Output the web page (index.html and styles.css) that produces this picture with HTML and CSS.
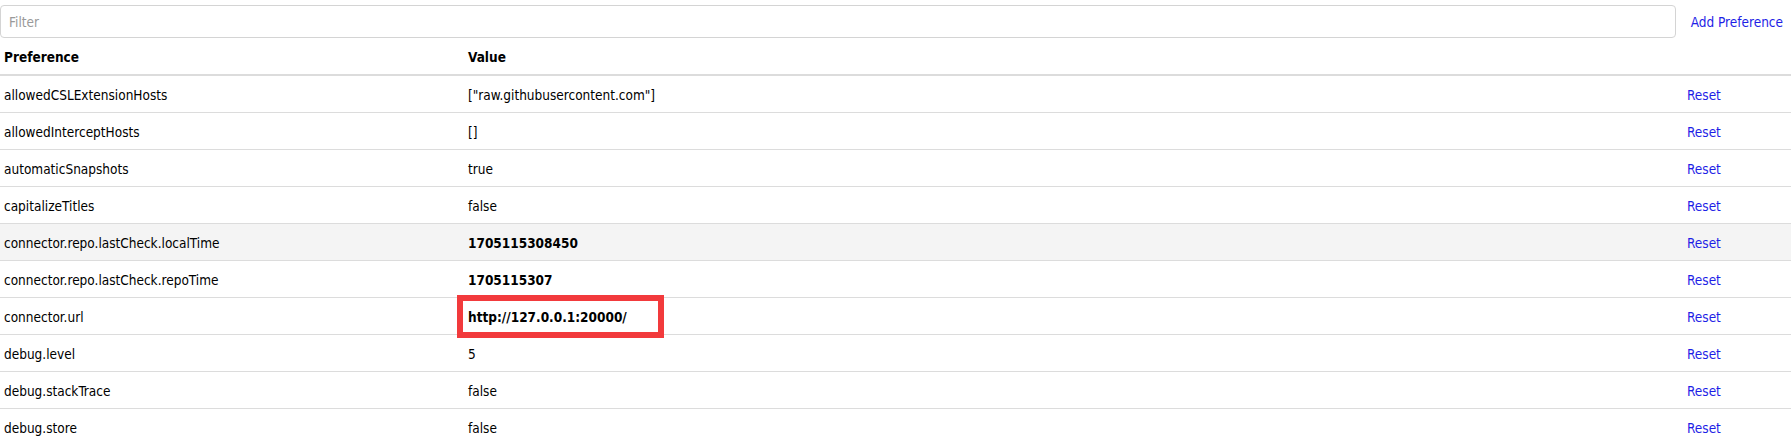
FILE: index.html
```html
<!DOCTYPE html>
<html>
<head>
<meta charset="utf-8">
<link rel="stylesheet" href="styles.css">
</head>
<body>
<div class="toolbar">
  <input class="filter" type="text" placeholder="Filter">
  <a class="add-link" href="#">Add Preference</a>
</div>
<div class="table">
  <div class="row head">
    <div class="cell">Preference</div>
    <div class="cell">Value</div>
    <div class="cell"></div>
  </div>
  <div class="row">
    <div class="cell">allowedCSLExtensionHosts</div>
    <div class="cell">["raw.githubusercontent.com"]</div>
    <div class="cell"><a class="reset" href="#">Reset</a></div>
  </div>
  <div class="row">
    <div class="cell">allowedInterceptHosts</div>
    <div class="cell">[]</div>
    <div class="cell"><a class="reset" href="#">Reset</a></div>
  </div>
  <div class="row">
    <div class="cell">automaticSnapshots</div>
    <div class="cell">true</div>
    <div class="cell"><a class="reset" href="#">Reset</a></div>
  </div>
  <div class="row">
    <div class="cell">capitalizeTitles</div>
    <div class="cell">false</div>
    <div class="cell"><a class="reset" href="#">Reset</a></div>
  </div>
  <div class="row hover">
    <div class="cell">connector.repo.lastCheck.localTime</div>
    <div class="cell modified">1705115308450</div>
    <div class="cell"><a class="reset" href="#">Reset</a></div>
  </div>
  <div class="row">
    <div class="cell">connector.repo.lastCheck.repoTime</div>
    <div class="cell modified">1705115307</div>
    <div class="cell"><a class="reset" href="#">Reset</a></div>
  </div>
  <div class="row">
    <div class="cell">connector.url</div>
    <div class="cell modified marked">http://127.0.0.1:20000/<span class="highlight-box"></span></div>
    <div class="cell"><a class="reset" href="#">Reset</a></div>
  </div>
  <div class="row">
    <div class="cell">debug.level</div>
    <div class="cell">5</div>
    <div class="cell"><a class="reset" href="#">Reset</a></div>
  </div>
  <div class="row">
    <div class="cell">debug.stackTrace</div>
    <div class="cell">false</div>
    <div class="cell"><a class="reset" href="#">Reset</a></div>
  </div>
  <div class="row">
    <div class="cell">debug.store</div>
    <div class="cell">false</div>
    <div class="cell"><a class="reset" href="#">Reset</a></div>
  </div>
</div>
</body>
</html>
```

FILE: styles.css
```css
html, body {
  margin: 0;
  padding: 0;
  background: #ffffff;
}

body {
  font-family: "DejaVu Sans Condensed", "DejaVu Sans", sans-serif;
  font-size: 13.5px;
  color: #000000;
  overflow: hidden;
}

.toolbar {
  display: flex;
  align-items: center;
  padding-top: 5px;
  padding-right: 8px;
  gap: 15px;
}

.filter {
  flex: 1;
  box-sizing: border-box;
  height: 33px;
  margin: 0;
  padding: 0 8px;
  border: 1px solid #d4d4d4;
  border-radius: 4px;
  font-family: inherit;
  font-size: 13.5px;
  color: #000;
  outline: none;
}

.filter::placeholder {
  color: #9a9a9a;
}

.add-link,
.reset {
  color: #1e1ee6;
  text-decoration: none;
}

.table {
  display: flex;
  flex-direction: column;
}

.row {
  display: grid;
  grid-template-columns: 464px 1fr 108px;
  align-items: stretch;
  height: 36px;
  border-bottom: 1px solid #dcdcdc;
}

.row.head {
  font-weight: bold;
  border-bottom: 2px solid #dcdcdc;
}

.row.hover {
  background: #f4f4f4;
}

.cell {
  display: flex;
  align-items: center;
  padding-left: 4px;
  padding-top: 1px;
  white-space: nowrap;
}

.modified {
  font-weight: bold;
}

.marked {
  position: relative;
}

.highlight-box {
  position: absolute;
  left: -7px;
  top: -3px;
  width: 207px;
  height: 43px;
  box-sizing: border-box;
  border: 6px solid #f23a3c;
}
```
